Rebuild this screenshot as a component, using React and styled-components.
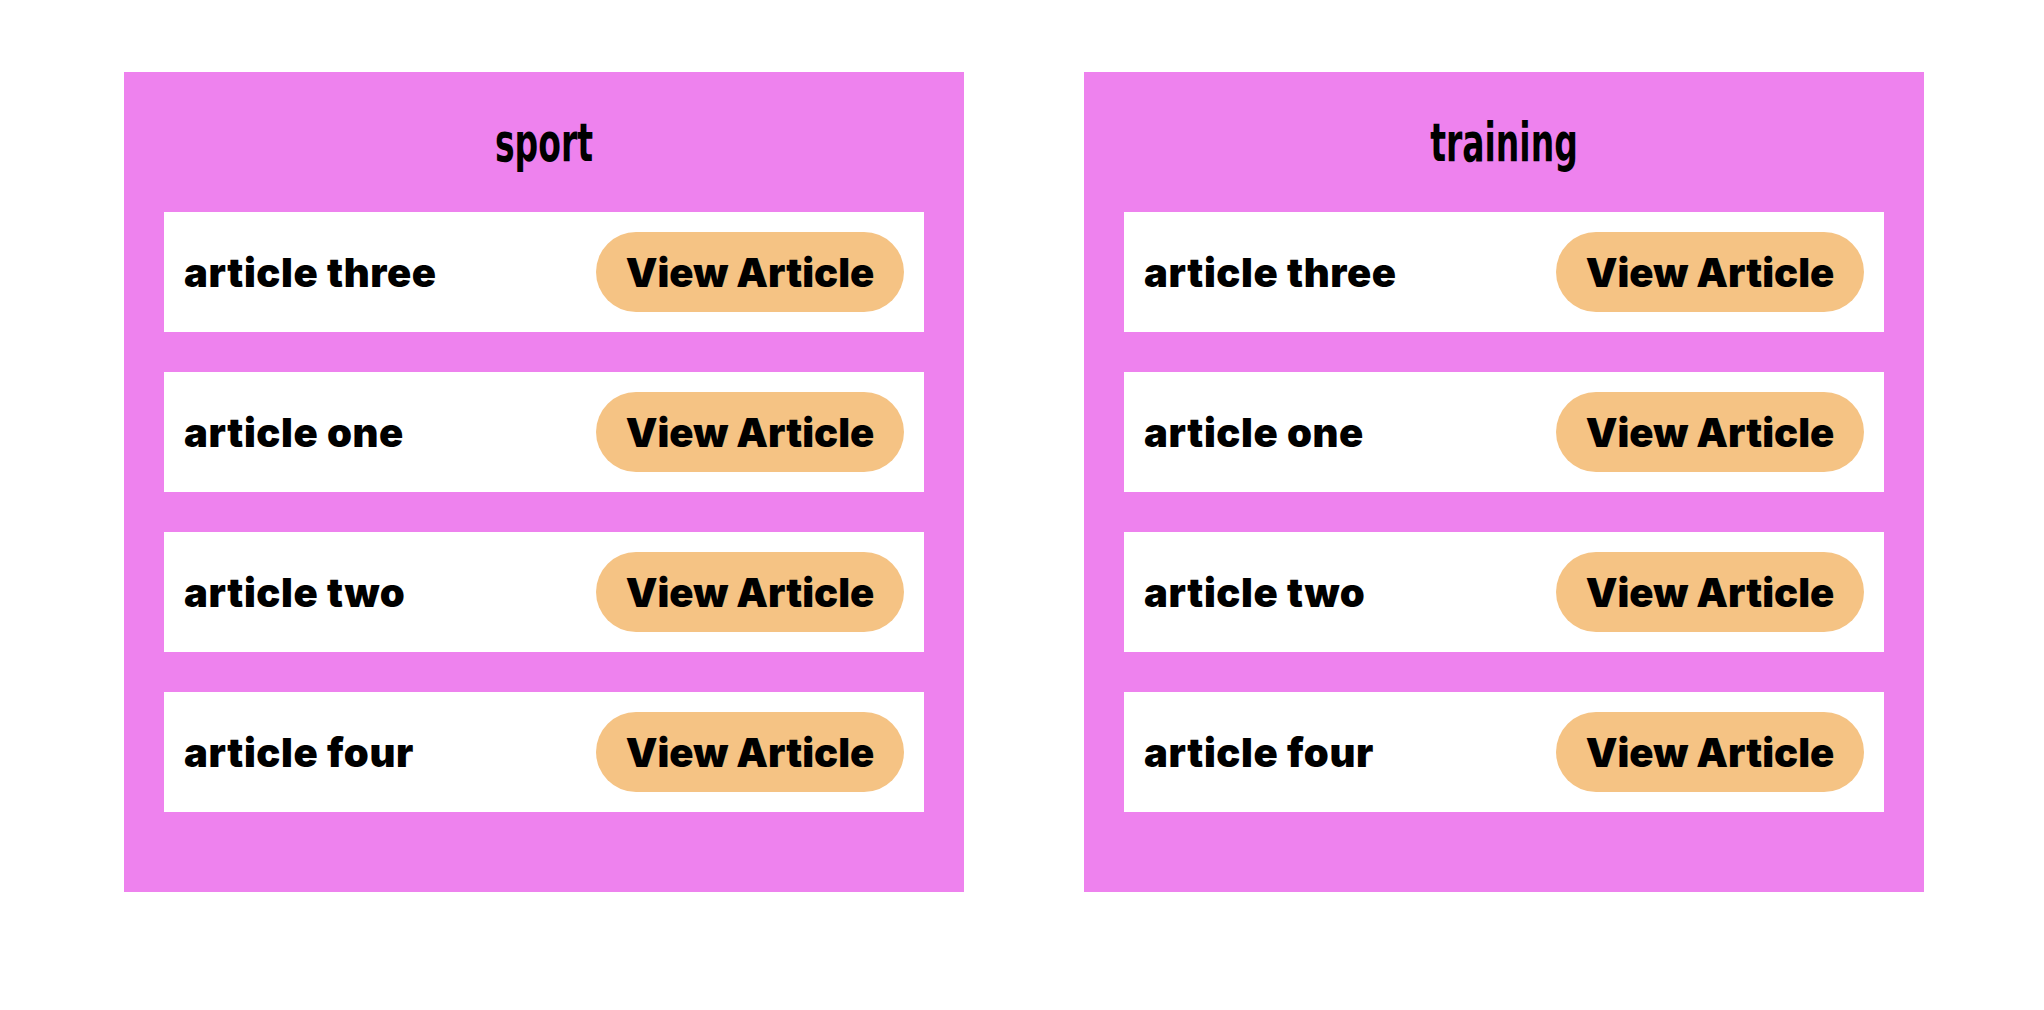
import React from 'react';
import styled, { createGlobalStyle } from 'styled-components';

const GlobalStyle = createGlobalStyle`
   body {
      margin: 0;
      background: #ffffff;
      font-family: Inter, "Open Sans", sans-serif;
   }
`;

const categories = [
   { title: 'sport', articles: ['article three', 'article one', 'article two', 'article four'] },
   { title: 'training', articles: ['article three', 'article one', 'article two', 'article four'] },
];

const App = () => {
   return (
      <>
         <GlobalStyle />
         <Page>
            {categories.map((category) => (
               <Panel key={category.title}>
                  <Title>{category.title}</Title>
                  <List>
                     {category.articles.map((article) => (
                        <Row key={article}>
                           <ArticleName>{article}</ArticleName>
                           <ViewButton>View Article</ViewButton>
                        </Row>
                     ))}
                  </List>
               </Panel>
            ))}
         </Page>
      </>
   );
};

const Page = styled.div`
   display: flex;
   gap: 120px;
   padding: 72px 0 118px 124px;
`;
const Panel = styled.section`
   width: 840px;
   height: 820px;
   box-sizing: border-box;
   background-color: violet;
   padding: 0 40px;
   display: flex;
   flex-direction: column;
`;
const Title = styled.h1`
   margin: 0;
   height: 140px;
   display: flex;
   align-items: center;
   justify-content: center;
   font-family: "Liberation Sans Narrow", "DejaVu Sans Condensed", sans-serif;
   font-weight: 700;
   font-size: 54px;
   color: #000;
   transform: scaleX(0.68);
`;
const List = styled.div`
   display: flex;
   flex-direction: column;
   gap: 40px;
`;
const Row = styled.div`
   height: 120px;
   background: #fff;
   display: flex;
   align-items: center;
   justify-content: space-between;
   padding: 0 20px;
`;
const ArticleName = styled.span`
   font-family: Inter, sans-serif;
   font-weight: 900;
   font-size: 40px;
   letter-spacing: 0.6px;
   color: #000;
`;
const ViewButton = styled.button`
   width: 308px;
   height: 80px;
   border: 0;
   border-radius: 40px;
   background-color: #f5c384;
   font-family: Inter, sans-serif;
   font-weight: 900;
   font-size: 40px;
   letter-spacing: 0;
   color: #000;
   cursor: pointer;
   padding: 0;
`;

export default App;
